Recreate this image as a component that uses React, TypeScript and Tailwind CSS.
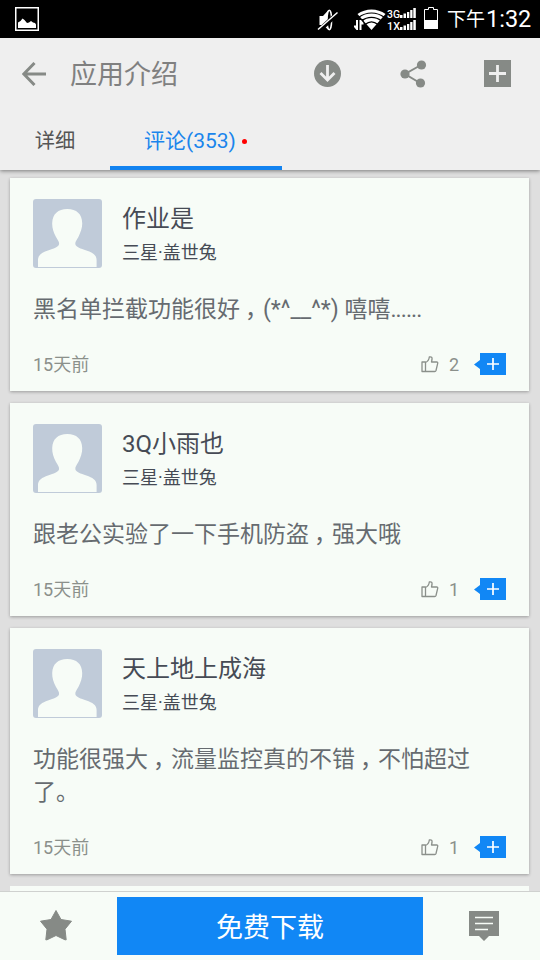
import { Fragment } from "react";

type Review = {
  name: string;
  device: string;
  lines: string[];
  trail?: string;
  date: string;
  likes: number;
};

const reviews: Review[] = [
  {
    name: "作业是",
    device: "三星·盖世兔",
    lines: ["黑名单拦截功能很好，(*^__^*) 嘻嘻"],
    trail: "......",
    date: "15天前",
    likes: 2,
  },
  {
    name: "3Q小雨也",
    device: "三星·盖世兔",
    lines: ["跟老公实验了一下手机防盗，强大哦"],
    date: "15天前",
    likes: 1,
  },
  {
    name: "天上地上成海",
    device: "三星·盖世兔",
    lines: ["功能很强大，流量监控真的不错，不怕超过", "了。"],
    date: "15天前",
    likes: 1,
  },
];

// Full-width commas sit in the middle of their cell
function CommentLine({ text, trail }: { text: string; trail?: string }) {
  const parts = text.split("，");
  return (
    <div className="whitespace-nowrap">
      {parts.map((part, i) => (
        <Fragment key={i}>
          {i > 0 && (
            <span className="inline-block w-[23px] pl-[5px] [font-feature-settings:'halt']">，</span>
          )}
          {part}
        </Fragment>
      ))}
      {trail && <span className="tracking-[-0.9px]">{trail}</span>}
    </div>
  );
}

function StatusBar() {
  return (
    <div className="flex h-[38px] shrink-0 items-center bg-black text-white">
      <svg className="ml-[15px] h-6 w-6" viewBox="0 0 24 24">
        <rect x="0.75" y="0.75" width="22.5" height="22.5" fill="none" stroke="#fff" strokeWidth="1.5" />
        <path d="M3 21v-5.500l2.500-1.500 2-2.500 2 1.500 2.500 3 2-.5 2-1.500 2 1.500 2 .5 1 1.500v3.500z" fill="#fff" />
      </svg>
      <svg className="ml-[278px] h-[38px] w-[124px]" viewBox="0 0 124 38">
        <path d="M2.500 16h3.500l5.500-6h1.500v20h-1.500L6 25H2.500z" fill="#fff" />
        <ellipse cx="12.300" cy="20" rx="2.300" ry="9.700" fill="#000" stroke="#fff" strokeWidth="1.500" />
        <path d="M1.500 31L20 14" stroke="#000" strokeWidth="4.500" />
        <path d="M1 29.500L20.500 12.500" stroke="#fff" strokeWidth="1.500" />
        <path d="M54.500 30L40.500 14c8-6 20-6 28 0z" fill="#fff" />
        <g fill="none" stroke="#000" strokeWidth="1.200">
          <path d="M41.500 17.500c8-6 18-6 26 0M44.500 21c6-4.800 14-4.800 20 0M48 24.500c4-3.300 9-3.300 13 0" />
        </g>
        <path d="M39 19h7.500v5H46l-1 6h-6z" fill="#000" />
        <path d="M39 20h2v10h-1.500L37 27v-1.500h2zM42.500 30V20H44l2.500 3v1.500h-2V30z" fill="#fff" />
        <g fill="#fff" fontFamily="'Roboto', sans-serif" fontSize="11.500" fontWeight="500">
          <text x="70" y="18" textLength="13" lengthAdjust="spacingAndGlyphs">3G</text>
          <text x="70" y="30" textLength="13" lengthAdjust="spacingAndGlyphs">1X</text>
        </g>
        <g fill="#fff">
          <path d="M83 15h2.500v3H83zM86.500 13.500H89V18h-2.500zM90 12h2.300v6H90zM93.200 10h2.300v8h-2.300zM96.300 8h2.500v10h-2.500z" />
          <path d="M83 27h2.500v3H83zM86.500 25.500H89V30h-2.500zM90 24h2.300v6H90zM93.200 22h2.300v8h-2.300zM96.300 20h2.500v10h-2.500z" />
        </g>
        <path d="M107.500 28.500v-19h4v-2h5v2h4v19z" fill="none" stroke="#fff" />
        <path d="M107 20h14v9h-14z" fill="#fff" />
      </svg>
      <div className="ml-[6px] flex items-center whitespace-nowrap">
        <span className="pt-px text-[19px] leading-none">下午</span>
        <span className="ml-px pt-px text-[23.500px] leading-none">1:32</span>
      </div>
    </div>
  );
}

function Header() {
  return (
    <header className="relative z-10 flex h-[132px] shrink-0 flex-col bg-[#efefef] shadow-[0_1px_4px_rgba(0,0,0,0.45)]">
      <div className="flex h-[71px] items-center text-[#868a86]">
        <svg className="ml-[22px] h-6 w-6" viewBox="0 0 24 24" fill="none" stroke="currentColor" strokeWidth="3">
          <path d="M24 12H2M12.500 1L1.800 12l10.700 11" />
        </svg>
        <h1 className="ml-6 w-[220px] pt-1 text-[27px] leading-none text-[#808080]">应用介绍</h1>
        <svg className="ml-6 h-[27px] w-[27px]" viewBox="0 0 27 27">
          <circle cx="13.500" cy="13.500" r="13.500" fill="currentColor" />
          <path d="M13.500 5v15M6.500 13l7 7 7-7" fill="none" stroke="#efefef" strokeWidth="2.800" />
        </svg>
        <svg className="ml-[59px] h-[28px] w-[27px]" viewBox="0 0 27 28" fill="currentColor">
          <path d="M21 5L5 14l15 9" fill="none" stroke="currentColor" strokeWidth="2" />
          <circle cx="21.500" cy="5" r="4.600" />
          <circle cx="5" cy="14" r="4.600" />
          <circle cx="20.500" cy="23" r="4.600" />
        </svg>
        <svg className="ml-[57px] h-[27px] w-[27px]" viewBox="0 0 27 27">
          <path d="M0 0h27v27H0z" fill="currentColor" />
          <path d="M13.500 5v17M5 13.500h17" stroke="#efefef" strokeWidth="2.800" />
        </svg>
      </div>
      <nav className="flex flex-1 text-[20.300px] leading-none">
        <div className="flex w-[110px] items-center justify-center pt-[3px] text-[#555]">详细</div>
        <div className="flex w-[172px] items-center border-b-4 border-[#1283f0] pt-[7px] pl-[34px] text-[21px] text-[#1a85ec]">
          评论(353)
          <span className="ml-[6px] h-[5px] w-[5px] rounded-full bg-[#f00]" />
        </div>
      </nav>
    </header>
  );
}

function ReviewCard({ review }: { review: Review }) {
  return (
    <article className="shrink-0 bg-[#f7fcf7] px-[23px] pt-[21px] pb-[14px] shadow-[0_1px_3px_rgba(0,0,0,0.3)]">
      <div className="flex h-[69px]">
        <svg className="h-[69px] w-[69px] rounded-[3px]" viewBox="0 0 69 69">
          <path d="M0 0h69v69H0z" fill="#c0cbd9" />
          <path
            d="M5 68v-7c0-5 4-7.500 10-9.500 6-2 10-3.500 11-6 .5-2.500-1-4-3-7.500-2.500-5-4-9-3.800-14C19.500 15 25 10 34.300 10S49 15 49.200 24c.2 5-1.500 9-3.800 14-2 3.500-3.500 5-3 7.500 1 2.500 5 4 11 6s10.200 4.500 10.200 9.500v7z"
            fill="#f7fcf7"
          />
        </svg>
        <div className="ml-5 pt-[3px] text-[#464b55]">
          <div className="text-[24px] leading-[34px]">{review.name}</div>
          <div className="text-[18px] leading-[34px]">{review.device}</div>
        </div>
      </div>
      <div className="mt-[25px] text-[23px] leading-[33px] text-[#666b70]">
        {review.lines.map((line) => (
          <CommentLine key={line} text={line} trail={review.trail} />
        ))}
      </div>
      <div className="mt-[26px] flex h-[25px] items-center text-[18px] leading-none text-[#8b908b]">
        <span>{review.date}</span>
        <svg className="ml-auto h-[17px] w-[18px]" viewBox="0 0 18 17" fill="none" stroke="currentColor" strokeWidth="1.300" strokeLinejoin="round">
          <path d="M1 6h3.500v9.500H1zM4.500 6.500c2.500-1 3.500-2.500 3.800-5.500 2.200-.5 3 .5 2.700 2.500L10.500 6h5.200q1.300 0 1 1.300L15 14.500q-.3 1-1.300 1H4.500" />
        </svg>
        <span className="ml-[10px] w-[10px] pt-px">{review.likes}</span>
        <svg className="mb-[2px] ml-[15px] h-[22px] w-8" viewBox="0 0 32 22">
          <path d="M6 0h26v22H6v-6L0 11.500 6 7z" fill="#1187f5" />
          <path d="M19 5v12M13 11h12" stroke="#fff" strokeWidth="1.700" />
        </svg>
      </div>
    </article>
  );
}

function BottomBar() {
  return (
    <footer className="relative z-10 flex h-[69px] shrink-0 items-center border-t border-[#cfd1cf] bg-[#f7fcf7] text-[#868a86]">
      <svg className="mb-[3px] ml-[39px] h-[32px] w-[34px]" viewBox="0 0 34 32">
        <path
          d="M17 1.500l5 9 10.500 1.700-6.500 8 1.200 10.600H26L17 26.500 8 30.800H6.800L8 20.200l-6.500-8L12 10.500z"
          fill="currentColor"
          stroke="currentColor"
          strokeLinejoin="round"
        />
      </svg>
      <button className="ml-[44px] h-[58px] w-[306px] bg-[#1187f5] pt-[5px] text-[27px] leading-none text-white">
        免费下载
      </button>
      <svg className="ml-[46px] h-[30px] w-[30px]" viewBox="0 0 30 30">
        <path d="M0 0h30v25H20l-5 5-5-5H0z" fill="currentColor" />
        <path d="M6 6.500h18M6 12.500h18M6 18.500h13" stroke="#f7fcf7" strokeWidth="1.500" />
      </svg>
    </footer>
  );
}

export default function App() {
  return (
    <div className="flex h-[960px] w-[540px] flex-col overflow-hidden bg-[#dfdfdf] font-['Roboto','Noto_Sans_CJK_SC',sans-serif]">
      <StatusBar />
      <Header />
      <main className="flex min-h-0 flex-1 flex-col gap-3 overflow-hidden pt-2 pr-[11px] pl-[10px]">
        {reviews.map((review) => (
          <ReviewCard key={review.name} review={review} />
        ))}
        <div className="h-10 shrink-0 bg-[#f7fcf7]" />
      </main>
      <BottomBar />
    </div>
  );
}
